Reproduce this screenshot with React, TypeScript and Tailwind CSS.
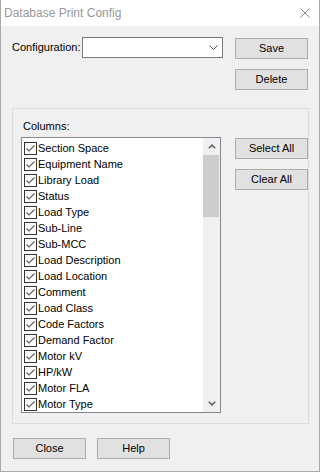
import React from 'react'

const columns = [
  'Section Space',
  'Equipment Name',
  'Library Load',
  'Status',
  'Load Type',
  'Sub-Line',
  'Sub-MCC',
  'Load Description',
  'Load Location',
  'Comment',
  'Load Class',
  'Code Factors',
  'Demand Factor',
  'Motor kV',
  'HP/kW',
  'Motor FLA',
  'Motor Type',
]

function WinButton({ label, className = '' }: { label: string; className?: string }) {
  return (
    <div
      className={`w-[73px] h-[21px] flex items-center justify-center bg-[#e1e1e1] border border-[#adadad] text-black ${className}`}
    >
      {label}
    </div>
  )
}

function CheckRow({ label }: { label: string }) {
  return (
    <div className="flex items-center h-[16px] shrink-0">
      <div className="w-[13px] h-[13px] border border-[#333333] bg-white flex items-center justify-center shrink-0">
        <svg width="11" height="11" viewBox="0 0 11 11">
          <path d="M1.5 5.5 L4 8 L9.5 2.5" fill="none" stroke="#5a5a5a" strokeWidth="1.1" />
        </svg>
      </div>
      <span className="ml-[1px] whitespace-nowrap leading-[16px]">{label}</span>
    </div>
  )
}

export default function App() {
  return (
    <div
      className="w-[320px] h-[472px] flex flex-col border-x border-b border-[#aaaaaa] bg-[#f0f0f0] text-[11px] text-black overflow-hidden"
      style={{ fontFamily: '"Liberation Sans", Arial, sans-serif' }}
    >
      {/* Title bar */}
      <div className="h-[26px] bg-white flex items-center justify-between pl-[3px] pr-[9px] shrink-0">
        <span className="text-[12px] text-[#999999]">Database Print Config</span>
        <svg width="10" height="10" viewBox="0 0 10 10">
          <path d="M0.5 0.5 L9.5 9.5 M9.5 0.5 L0.5 9.5" stroke="#8a8a8a" strokeWidth="1" />
        </svg>
      </div>

      {/* Configuration row */}
      <div className="flex items-start pt-[11px] pl-[11px]">
        <div className="w-[70px] h-[21px] flex items-center">Configuration:</div>
        <div className="w-[141px] h-[21px] bg-white border border-[#7a7a7a] flex items-center justify-end pr-[4px]">
          <svg width="9" height="6" viewBox="0 0 9 6">
            <path d="M0.5 0.5 L4.5 4.5 L8.5 0.5" fill="none" stroke="#555555" strokeWidth="1" />
          </svg>
        </div>
        <div className="ml-[12px] mt-[1px] flex flex-col gap-[10px]">
          <WinButton label="Save" />
          <WinButton label="Delete" />
        </div>
      </div>

      {/* Columns group */}
      <div className="mt-[18px] ml-[11px] w-[297px] h-[316px] border border-[#dcdcdc] pt-[9px] pl-[8px] shrink-0">
        <div className="h-[16px] leading-[16px] pl-[2px]">Columns:</div>
        <div className="flex items-start mt-[3px]">
          <div className="w-[200px] h-[276px] border border-[#828790] bg-white flex overflow-hidden">
            <div className="flex-1 flex flex-col pt-[2px] pl-[2px] overflow-hidden">
              {columns.map(c => (
                <CheckRow key={c} label={c} />
              ))}
            </div>
            <div className="w-[17px] bg-[#f0f0f0] flex flex-col shrink-0">
              <div className="h-[17px] flex items-center justify-center">
                <svg width="8" height="5" viewBox="0 0 8 5">
                  <path d="M0.8 4.3 L4 1.2 L7.2 4.3" fill="none" stroke="#606060" strokeWidth="1.6" />
                </svg>
              </div>
              <div className="flex-1">
                <div className="h-[62px] w-[16px] bg-[#cdcdcd]" />
              </div>
              <div className="h-[17px] flex items-center justify-center">
                <svg width="8" height="5" viewBox="0 0 8 5">
                  <path d="M0.8 0.7 L4 3.8 L7.2 0.7" fill="none" stroke="#606060" strokeWidth="1.6" />
                </svg>
              </div>
            </div>
          </div>
          <div className="ml-[14px] mt-[1px] flex flex-col gap-[10px]">
            <WinButton label="Select All" />
            <WinButton label="Clear All" />
          </div>
        </div>
      </div>

      {/* Bottom buttons */}
      <div className="flex gap-[11px] mt-[14px] ml-[12px]">
        <WinButton label="Close" />
        <WinButton label="Help" />
      </div>
    </div>
  )
}
